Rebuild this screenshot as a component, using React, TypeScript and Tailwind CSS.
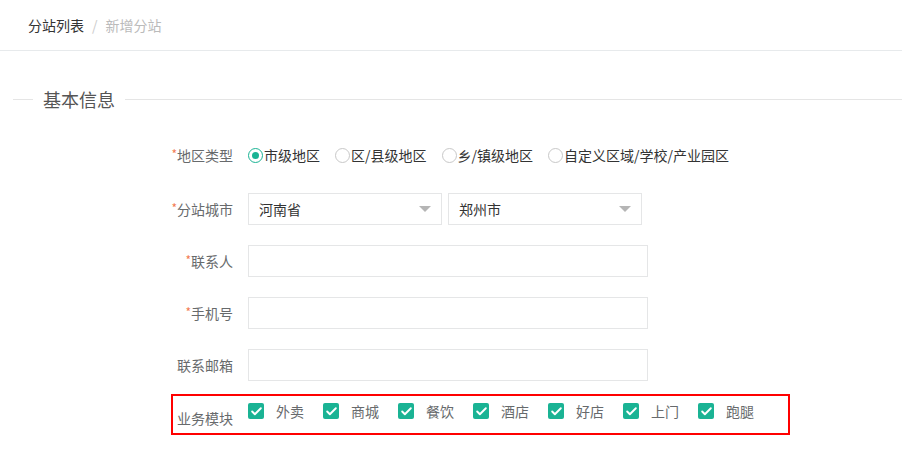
import { Check } from 'lucide-react';

const font = { fontFamily: '"Noto Sans CJK SC", "Noto Sans", sans-serif' };

const regions = ['市级地区', '区/县级地区', '乡/镇级地区', '自定义区域/学校/产业园区'];
const modules = ['外卖', '商城', '餐饮', '酒店', '好店', '上门', '跑腿'];

function Label({ text, required }: { text: string; required?: boolean }) {
  return (
    <div className="w-[233px] mr-[15px] shrink-0 text-right text-[14px] text-[#676a6c]">
      {required && <span className="text-[#f37b53] text-[12px] align-top">*</span>}
      {text}
    </div>
  );
}

function Select({ value }: { value: string }) {
  return (
    <div className="w-[194px] h-[32px] border border-[#e5e6e7] flex items-center justify-between pl-[10px] pr-[10px] text-[14px] text-[#333]">
      <span>{value}</span>
      <span className="w-0 h-0 border-l-[6px] border-r-[6px] border-t-[6px] border-l-transparent border-r-transparent border-t-[#b5b5b5]" />
    </div>
  );
}

function Row({ label, required }: { label: string; required?: boolean }) {
  return (
    <div className="flex items-center h-[32px] mt-[20px]">
      <Label text={label} required={required} />
      <div className="w-[400px] h-[32px] border border-[#e5e6e7]" />
    </div>
  );
}

export default function App() {
  return (
    <div className="w-[902px] h-[456px] bg-white overflow-hidden" style={font}>
      <div className="h-[51px] border-b border-[#e7eaec] flex items-center px-[28px] text-[14px]">
        <span className="text-[#333]">分站列表</span>
        <span className="text-[#ccc] mx-[8px]">/</span>
        <span className="text-[#bbb]">新增分站</span>
      </div>

      <div className="flex items-center mt-[36px] h-[24px] pl-[13px]">
        <div className="w-[20px] h-px bg-[#e5e5e5]" />
        <span className="px-[10px] text-[18px] text-[#555] leading-[24px]">基本信息</span>
        <div className="flex-1 h-px bg-[#e5e5e5]" />
      </div>

      <div className="flex items-center h-[32px] mt-[28px]">
        <Label text="地区类型" required />
        <div className="flex items-center text-[14px] text-[#333]">
          {regions.map((r, i) => (
            <label key={r} className={`flex items-center ${i > 0 ? 'ml-[15px]' : ''}`}>
              <span
                className={`w-[15px] h-[15px] rounded-full border flex items-center justify-center mr-[1px] ${
                  i === 0 ? 'border-[#1ab394]' : 'border-[#c8c8c8]'
                }`}
              >
                {i === 0 && <span className="w-[7px] h-[7px] rounded-full bg-[#1ab394]" />}
              </span>
              {r}
            </label>
          ))}
        </div>
      </div>

      <div className="flex items-center h-[32px] mt-[22px]">
        <Label text="分站城市" required />
        <div className="flex gap-[6px]">
          <Select value="河南省" />
          <Select value="郑州市" />
        </div>
      </div>

      <Row label="联系人" required />
      <Row label="手机号" required />
      <Row label="联系邮箱" />

      <div className="ml-[171px] mt-[13px] w-[619px] h-[41px] border-2 border-[#f00] flex items-start">
        <div className="w-[60px] mr-[15px] shrink-0 text-right text-[14px] text-[#676a6c] mt-[12px] leading-[20px]">
          业务模块
        </div>
        <div className="flex items-center mt-[7px]">
          {modules.map((m) => (
            <div key={m} className="flex items-center w-[75px]">
              <span className="w-[16px] h-[16px] rounded-[2px] bg-[#1ab394] flex items-center justify-center">
                <Check size={13} strokeWidth={3.5} className="text-white" />
              </span>
              <span className="ml-[12px] text-[14px] text-[#676a6c] leading-[16px]">{m}</span>
            </div>
          ))}
        </div>
      </div>
    </div>
  );
}
